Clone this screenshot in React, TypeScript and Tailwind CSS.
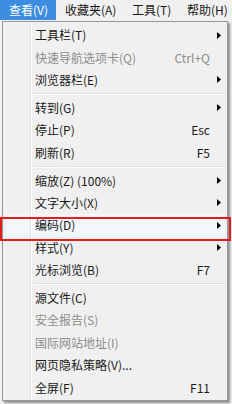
type Item =
  | { kind: 'sep' }
  | { kind: 'item'; label: string; shortcut?: string; sub?: boolean; disabled?: boolean; hot?: boolean }

const items: Item[] = [
  { kind: 'item', label: '工具栏(T)', sub: true },
  { kind: 'item', label: '快速导航选项卡(Q)', shortcut: 'Ctrl+Q', disabled: true },
  { kind: 'item', label: '浏览器栏(E)', sub: true },
  { kind: 'sep' },
  { kind: 'item', label: '转到(G)', sub: true },
  { kind: 'item', label: '停止(P)', shortcut: 'Esc' },
  { kind: 'item', label: '刷新(R)', shortcut: 'F5' },
  { kind: 'sep' },
  { kind: 'item', label: '缩放(Z) (100%)', sub: true },
  { kind: 'item', label: '文字大小(X)', sub: true },
  { kind: 'item', label: '编码(D)', sub: true, hot: true },
  { kind: 'item', label: '样式(Y)', sub: true },
  { kind: 'item', label: '光标浏览(B)', shortcut: 'F7' },
  { kind: 'sep' },
  { kind: 'item', label: '源文件(C)' },
  { kind: 'item', label: '安全报告(S)', disabled: true },
  { kind: 'item', label: '国际网站地址(I)', disabled: true },
  { kind: 'item', label: '网页隐私策略(V)...' },
  { kind: 'item', label: '全屏(F)', shortcut: 'F11' },
]

// menu bar entries with their slot widths, so the labels land where the reference has them
const menuBar = [
  { name: '查看(V)', cls: 'w-[56px] pl-[9px] bg-[#3c8ce0] text-white' },
  { name: '收藏夹(A)', cls: 'w-[68px] pl-[9px]' },
  { name: '工具(T)', cls: 'w-[55px] pl-[8px]' },
  { name: '帮助(H)', cls: 'w-[53px] pl-[8px]' },
]

function Arrow() {
  return (
    <svg viewBox="0 0 4 7" className="h-[7px] w-[4px]" aria-hidden="true">
      <path d="M0 0L4 3.5L0 7Z" fill="#000" />
    </svg>
  )
}

export default function App() {
  return (
    <div
      className="relative h-[404px] w-[232px] overflow-hidden bg-[#f0f0f0] text-[12px] text-[#1a1a1a]"
      style={{ fontFamily: '"Noto Sans CJK SC", sans-serif' }}
    >
      {/* menu bar */}
      <div className="flex h-[20px] items-center whitespace-nowrap bg-[#f0f0f0]">
        {menuBar.map((m) => (
          <div key={m.name} className={`flex h-full shrink-0 items-center leading-none ${m.cls}`}>
            {m.name}
          </div>
        ))}
      </div>

      {/* drop-down */}
      <div className="ml-[2px] mt-[1px] w-[226px] border border-[#979797] bg-[#f0f0f0] px-[2px] pb-[1px] pt-[2px] shadow-[2px_2px_2px_rgba(0,0,0,0.4)]">
        {items.map((item, i) =>
          item.kind === 'sep' ? (
            <div key={i} className="flex h-[5.5px]">
              <div className="w-[26px] shrink-0 border-r border-[#e2e3e3] shadow-[1px_0_0_#fff]" />
              <div className="flex flex-1 items-center pl-[2px]">
                <div className="h-[2px] w-full border-t border-b border-t-[#e0e0e0] border-b-white" />
              </div>
            </div>
          ) : (
            <div
              key={i}
              className={`flex h-[22.4px] items-center ${item.hot ? 'bg-[#f3f6fa]' : ''} ${
                item.disabled ? 'text-[#8d8d8d]' : ''
              }`}
            >
              <div className="h-full w-[26px] shrink-0 border-r border-[#e2e3e3] shadow-[1px_0_0_#fff]" />
              <div className="flex-1 whitespace-nowrap pl-[4px] leading-none">{item.label}</div>
              {item.shortcut && <div className="leading-none">{item.shortcut}</div>}
              <div className="flex w-[15px] justify-center pl-[3px]">{item.sub && <Arrow />}</div>
            </div>
          ),
        )}
      </div>

      {/* red annotation box */}
      <div className="absolute left-0 top-[217px] h-[24px] w-[231px] border-2 border-[#e01c1c]" />
    </div>
  )
}
